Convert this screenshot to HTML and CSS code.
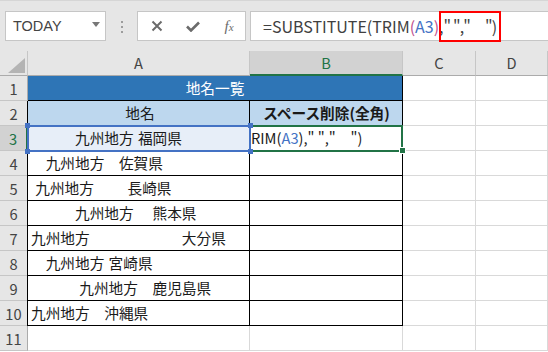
FILE: index.html
```html
<!DOCTYPE html>
<html lang="ja">
<head>
  <meta charset="UTF-8">
  <title>地名一覧</title>
  <link rel="stylesheet" href="styles.css">
</head>
<body>
  <div class="toolbar">
    <div class="namebox">
      <span>TODAY</span>
      <span class="caret"></span>
    </div>
    <div class="grip"><i></i><i></i><i></i></div>
    <div class="fbtns">
      <svg width="12" height="12" viewBox="0 0 12 12"><path d="M1.5 1.5 L10.5 10.5 M10.5 1.5 L1.5 10.5" stroke="#6b6b6b" stroke-width="2" fill="none"/></svg>
      <svg width="14" height="11" viewBox="0 0 14 11"><path d="M1 5.5 L5 9.5 L13 1.5" stroke="#6b6b6b" stroke-width="2.6" fill="none"/></svg>
      <span class="fx">f<small>x</small></span>
    </div>
    <div class="fbar">
      <span class="ftext">=SUBSTITUTE(TRIM<b class="p">(</b><b class="r">A3</b><b class="p">)</b>,<span class="tail">" ","　")</span></span><span class="cursor"></span>
      <div class="mark"></div>
    </div>
  </div>

  <div class="sheet">
    <div class="corner"></div>
    <div class="hd">A</div>
    <div class="hd sel">B</div>
    <div class="hd">C</div>
    <div class="hd">D</div>

    <div class="rh">1</div>
    <div class="title">地名一覧</div>
    <div class="c"></div>
    <div class="c"></div>

    <div class="rh">2</div>
    <div class="t a head center">地名</div>
    <div class="t b head center bold">スペース削除(全角)</div>
    <div class="c"></div>
    <div class="c"></div>

    <div class="rh sel">3</div>
    <div class="t a ref">　　　九州地方 福岡県</div>
    <div class="t b active">RIM(<span class="r">A3</span>)," ","　")</div>
    <div class="c"></div>
    <div class="c"></div>

    <div class="rh">4</div>
    <div class="t a">　九州地方　佐賀県</div>
    <div class="t b"></div>
    <div class="c"></div>
    <div class="c"></div>

    <div class="rh">5</div>
    <div class="t a"> 九州地方　　 長崎県</div>
    <div class="t b"></div>
    <div class="c"></div>
    <div class="c"></div>

    <div class="rh">6</div>
    <div class="t a">　　　九州地方　 熊本県</div>
    <div class="t b"></div>
    <div class="c"></div>
    <div class="c"></div>

    <div class="rh">7</div>
    <div class="t a">九州地方　　　　　　 大分県</div>
    <div class="t b"></div>
    <div class="c"></div>
    <div class="c"></div>

    <div class="rh">8</div>
    <div class="t a">　九州地方 宮崎県</div>
    <div class="t b"></div>
    <div class="c"></div>
    <div class="c"></div>

    <div class="rh">9</div>
    <div class="t a">　　　 九州地方　鹿児島県</div>
    <div class="t b"></div>
    <div class="c"></div>
    <div class="c"></div>

    <div class="rh">10</div>
    <div class="t a">九州地方　沖縄県</div>
    <div class="t b"></div>
    <div class="c"></div>
    <div class="c"></div>

    <div class="rh">11</div>
    <div class="c"></div>
    <div class="c"></div>
    <div class="c"></div>
    <div class="c"></div>
  </div>
</body>
</html>
```

FILE: styles.css
```css
* {
  margin: 0;
  padding: 0;
  box-sizing: border-box;
}
body {
  width: 548px;
  height: 352px;
  overflow: hidden;
  background: #fff;
  font-family: 'Noto Sans CJK JP', sans-serif;
  color: #1a1a1a;
}

/* formula bar strip */
.toolbar {
  display: flex;
  align-items: flex-start;
  height: 51px;
  padding-top: 11px;
  background: #e6e6e6;
  border-top: 1px solid #d6d6d6;
  overflow: hidden;
}
.namebox {
  display: flex;
  align-items: center;
  justify-content: space-between;
  width: 101px;
  height: 30px;
  margin-left: 5px;
  margin-top: -1px;
  padding: 0 5px 0 7px;
  background: #fff;
  border: 1px solid #c6c6c6;
  font-family: 'Liberation Sans', sans-serif;
  font-size: 14.5px;
  color: #444;
}
.caret {
  width: 0;
  height: 0;
  border-left: 4px solid transparent;
  border-right: 4px solid transparent;
  border-top: 5px solid #777;
  margin-top: -3px;
}
.grip {
  display: flex;
  flex-direction: column;
  align-items: center;
  gap: 3px;
  width: 31px;
  padding-top: 9px;
}
.grip i {
  width: 2px;
  height: 2px;
  background: #9c9c9c;
}
.fbtns {
  display: grid;
  grid-template-columns: 36px 36px 36px;
  align-items: center;
  justify-items: center;
  width: 109px;
  height: 30px;
  margin-top: -1px;
  padding-left: 1px;
  background: #fff;
  border: 1px solid #c6c6c6;
}
.fx {
  font-family: 'Liberation Serif', serif;
  font-style: italic;
  font-size: 15px;
  color: #6b6b6b;
  line-height: 1;
}
.fx small {
  font-size: 11px;
}
.fbar {
  position: relative;
  display: flex;
  align-items: center;
  flex: 1;
  height: 30px;
  margin-left: 4px;
  margin-right: -6px;
  margin-top: -1px;
  padding-left: 12px;
  background: #fff;
  border: 1px solid #c6c6c6;
  font-size: 16px;
  color: #404040;
  white-space: pre;
}
.ftext b {
  font-weight: normal;
}
.ftext .p {
  color: #c0508f;
}
.tail {
  letter-spacing: -0.9px;
}
.r {
  color: #4472c4;
}
.cursor {
  width: 1px;
  height: 23px;
  margin-left: 3px;
  background: #000;
}
.mark {
  position: absolute;
  left: 188px;
  top: -1px;
  width: 62px;
  height: 31px;
  border: 2px solid #ff0000;
}

/* worksheet grid */
.sheet {
  display: grid;
  grid-template-columns: 28px 222px 153px 73px 72px;
  grid-auto-rows: 25px;
  font-size: 14.67px;
}
.sheet > div {
  line-height: 24px;
  white-space: pre;
  overflow: visible;
}
.corner {
  display: flex;
  justify-content: flex-end;
  align-items: flex-end;
  padding: 0 2px 2px 0;
  background: #e6e6e6;
  border-right: 1px solid #c6c6c6;
  border-bottom: 1px solid #ababab;
}
.corner::after {
  content: "";
  width: 0;
  height: 0;
  border-left: 17px solid transparent;
  border-bottom: 15px solid #b4b4b4;
}
.hd {
  background: #e6e6e6;
  border-right: 1px solid #c6c6c6;
  border-bottom: 1px solid #ababab;
  text-align: center;
  color: #444;
}
.hd.sel {
  background: #d2d2d2;
  border-bottom: 2px solid #217346;
  color: #217346;
}
.rh {
  background: #e6e6e6;
  border-right: 1px solid #ababab;
  border-bottom: 1px solid #c6c6c6;
  text-align: center;
  color: #444;
  padding-top: 1px;
}
.rh.sel {
  background: #d2d2d2;
  border-right: 2px solid #217346;
  color: #217346;
}
.c {
  border-right: 1px solid #d9d9d9;
  border-bottom: 1px solid #d9d9d9;
}
.title {
  grid-column: span 2;
  background: #2e75b6;
  color: #fff;
  text-align: center;
  border-right: 1px solid #000;
  border-bottom: 1px solid #000;
}
.t {
  position: relative;
  padding-left: 3px;
  border-right: 1px solid #000;
  border-bottom: 1px solid #000;
}
.t.a {
  margin-left: -1px;
  border-left: 1px solid #000;
  word-spacing: 1px;
}
.t.b {
  padding-left: 1px;
}
.head {
  background: #bdd7ee;
}
.center {
  text-align: center;
}
.bold {
  font-weight: bold;
  padding-left: 0;
}

/* referenced cell and active cell */
.ref {
  background: #e7eef8;
  z-index: 2;
}
.ref::after {
  content: "";
  position: absolute;
  left: -1px;
  right: -2px;
  top: -1px;
  bottom: -2px;
  border: 2px solid #4472c4;
}
.ref::before {
  content: "";
  position: absolute;
  left: -3px;
  right: -4px;
  top: -3px;
  bottom: -4px;
  z-index: 1;
  background:
    linear-gradient(#4472c4, #4472c4) left top / 5px 5px no-repeat,
    linear-gradient(#4472c4, #4472c4) right top / 5px 5px no-repeat,
    linear-gradient(#4472c4, #4472c4) left bottom / 5px 5px no-repeat,
    linear-gradient(#4472c4, #4472c4) right bottom / 5px 5px no-repeat;
}
.active {
  z-index: 1;
}
.active::after {
  content: "";
  position: absolute;
  left: -1px;
  right: -1px;
  top: -1px;
  bottom: -2px;
  border: 2px solid #217346;
}
.active::before {
  content: "";
  position: absolute;
  right: -4px;
  bottom: -4px;
  width: 5px;
  height: 5px;
  background: #217346;
  border: 1px solid #fff;
  z-index: 1;
}
```
